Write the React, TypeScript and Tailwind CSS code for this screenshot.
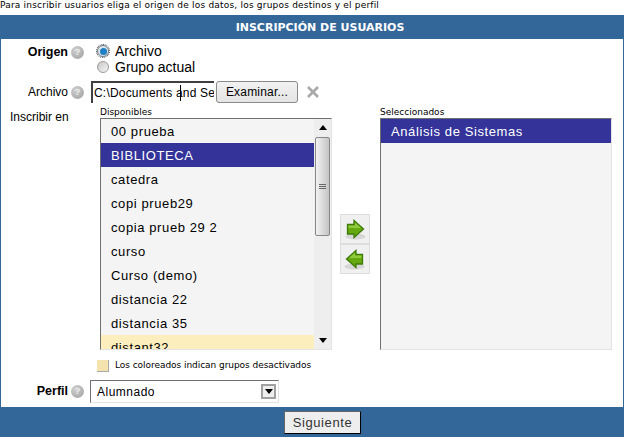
const groups = [
  'BIBLIOTECA',
  'catedra',
  'copi prueb29',
  'copia prueb 29 2',
  'curso',
  'Curso (demo)',
  'distancia 22',
  'distancia 35',
]

function Help() {
  return (
    <span className="flex h-[13px] w-[13px] shrink-0 items-center justify-center rounded-full bg-[radial-gradient(circle_at_35%_30%,#cfcfcf,#a0a0a0)] font-['Liberation_Sans',sans-serif] text-[9px] font-bold leading-none text-[#f0f0f0]">
      ?
    </span>
  )
}

function Arrow({ flip }: { flip?: boolean }) {
  return (
    <button className="flex h-[30px] w-[30px] items-center justify-center border border-[#dddddd] bg-[#f0f0f0]">
      <svg width="28" height="28" viewBox="0 0 28 28" className={flip ? '-scale-x-100' : ''}>
        <ellipse cx="14.5" cy="21.5" rx="10" ry="3" fill="#d6d6d6" />
        <path d="M6.5 9.5H13V5.5L22.5 14 13 22.5V19H6.5z" fill="#63a90f" stroke="#3d7a08" strokeWidth="1.3" />
        <path d="M7.5 10.5H14V7.5L20 13H7.5z" fill="#8fcb3a" />
      </svg>
    </button>
  )
}

export default function App() {
  return (
    <div className="flex h-[437px] w-[624px] flex-col overflow-hidden bg-white font-['DejaVu_Sans',sans-serif] text-black">
      <p className="h-[15px] text-[9px] leading-[11px] tracking-[0.2px]">
        Para inscribir usuarios eliga el origen de los datos, los grupos destinos y el perfil
      </p>
      <div className="h-[24px] bg-[#336699] pl-[16px] text-center text-[11px] font-bold leading-[25px] text-white">
        INSCRIPCIÓN DE USUARIOS
      </div>

      <div className="flex h-[368px] flex-col border-x border-[#336699] text-[12px]">
        <div className="mt-[4px] flex h-[32px]">
          <div className="flex h-[16px] w-[83px] items-center justify-end gap-[3px] pt-[2px]">
            <b className="font-['Liberation_Sans',sans-serif] text-[12.5px]">Origen</b>
            <Help />
          </div>
          <div className="ml-[13px] flex flex-col font-['Liberation_Sans',sans-serif] text-[14px] leading-[16px]">
            <label className="flex h-[16px] items-center gap-[6px]">
              <span className="flex h-[12px] w-[12px] items-center justify-center rounded-full border border-[#6a7a8a] bg-[#dfe6ec] outline-1 outline-dotted outline-[#444444]">
                <span className="h-[7px] w-[7px] rounded-full bg-[#1f7fc4]" />
              </span>
              Archivo
            </label>
            <label className="flex h-[16px] items-center gap-[6px]">
              <span className="h-[12px] w-[12px] rounded-full border border-[#9a9a9a] bg-[linear-gradient(135deg,#c8c8c8,#f4f4f4)]" />
              Grupo actual
            </label>
          </div>
        </div>

        <div className="mt-[6px] flex h-[22px] items-center">
          <div className="flex w-[83px] items-center justify-end gap-[3px]">
            <span className="font-['Liberation_Sans',sans-serif] text-[12px]">Archivo</span>
            <Help />
          </div>
          <div className="relative ml-[7px] h-[22px] w-[123px] overflow-hidden whitespace-nowrap border-l-2 border-t-2 border-[#404040] pl-px font-['Liberation_Sans',sans-serif] text-[12px] leading-[21px] tracking-[0.2px]">
            C:\Documents and Se
            <span className="absolute left-[87px] top-[2px] h-[16px] w-px bg-black" />
          </div>
          <button className="ml-[2px] h-[22px] w-[82px] rounded-[3px] border border-[#8a8a8a] bg-[linear-gradient(#f2f2f2,#e4e4e4)] font-['Liberation_Sans',sans-serif] text-[12px] leading-none tracking-[0.2px]">
            Examinar...
          </button>
          <svg width="12" height="12" viewBox="0 0 12 12" className="ml-[9px]">
            <path d="M1 1l10 10M11 1L1 11" stroke="#a8a8a8" strokeWidth="2.6" />
          </svg>
        </div>

        <div className="mt-[4px] flex h-[243px]">
          <div className="mt-[3px] w-[99px] pl-[9px] font-['Liberation_Sans',sans-serif] text-[12px] leading-[14px]">
            Inscribir en
          </div>
          <div className="w-[232px]">
            <div className="h-[11px] text-[9px] leading-[11px]">Disponibles</div>
            <div className="flex h-[232px] border border-[#e4e4e4] border-l-[#707070] border-t-[#707070] bg-[#f4f4f4]">
              <ul className="flex-1 overflow-hidden font-['Liberation_Sans',sans-serif] text-[13px] leading-[26px] tracking-[0.6px]">
                <li className="h-[24px] pl-[10px]">00 prueba</li>
                {groups.map((g, i) => (
                  <li
                    key={g}
                    className={i === 0 ? 'h-[24px] bg-[#333399] pl-[10px] text-white' : 'h-[24px] pl-[10px]'}
                  >
                    {g}
                  </li>
                ))}
                <li className="h-[24px] bg-[#fdefbd] pl-[10px]">distant32</li>
              </ul>
              <div className="flex w-[17px] flex-col items-center bg-[#eeeeee]">
                <span className="mt-[6px] h-0 w-0 border-x-[4px] border-b-[5px] border-x-transparent border-b-black" />
                <span className="mt-[7px] flex h-[99px] w-[15px] flex-col items-center justify-center gap-px rounded-[2px] border border-[#888888] bg-[linear-gradient(90deg,#f2f2f2,#c4c4c4)]">
                  <span className="h-px w-[7px] bg-[#666666]" />
                  <span className="h-px w-[7px] bg-[#666666]" />
                  <span className="h-px w-[7px] bg-[#666666]" />
                </span>
                <span className="mb-[6px] mt-auto h-0 w-0 border-x-[4px] border-t-[5px] border-x-transparent border-t-black" />
              </div>
            </div>
          </div>
          <div className="ml-[8px] mt-[107px] flex w-[40px] flex-col">
            <Arrow />
            <Arrow flip />
          </div>
          <div className="w-[232px]">
            <div className="h-[11px] text-[9px] leading-[11px]">Seleccionados</div>
            <ul className="h-[232px] border border-[#e4e4e4] border-l-[#707070] border-t-[#707070] bg-[#f4f4f4] font-['Liberation_Sans',sans-serif] text-[13px] leading-[26px] tracking-[0.6px]">
              <li className="h-[24px] bg-[#333399] pl-[10px] text-white">Análisis de Sistemas</li>
            </ul>
          </div>
        </div>

        <div className="ml-[96px] mt-[8px] flex h-[14px] items-center gap-[6px] pt-px text-[9px] tracking-[-0.05px]">
          <span className="h-[12px] w-[12px] border-b border-r border-[#aaaaaa] bg-[#f5e3ae]" />
          Los coloreados indican grupos desactivados
        </div>

        <div className="mt-[8px] flex h-[23px] items-center">
          <div className="flex w-[83px] items-center justify-end gap-[3px]">
            <b className="font-['Liberation_Sans',sans-serif] text-[12.5px]">Perfil</b>
            <Help />
          </div>
          <div className="ml-[6px] flex h-[23px] w-[189px] items-center justify-between border border-[#e4e4e4] border-l-[#707070] border-t-[#707070] pl-[6px] pr-[2px] font-['Liberation_Sans',sans-serif] text-[12px] tracking-[0.5px]">
            Alumnado
            <span className="flex h-[15px] w-[15px] items-center justify-center border-2 border-[#a0a0a0] bg-[#eeeeee]">
              <span className="h-0 w-0 border-x-[4px] border-t-[5px] border-x-transparent border-t-black" />
            </span>
          </div>
        </div>
      </div>

      <div className="flex h-[30px] items-center justify-center bg-[#336699] pl-[21px]">
        <button className="h-[23px] w-[77px] border border-black border-l-[#666666] border-t-[#666666] bg-[#eeeeee] font-['Liberation_Sans',sans-serif] text-[13px] leading-none tracking-[0.6px] text-[#333333]">
          Siguiente
        </button>
      </div>
    </div>
  )
}
